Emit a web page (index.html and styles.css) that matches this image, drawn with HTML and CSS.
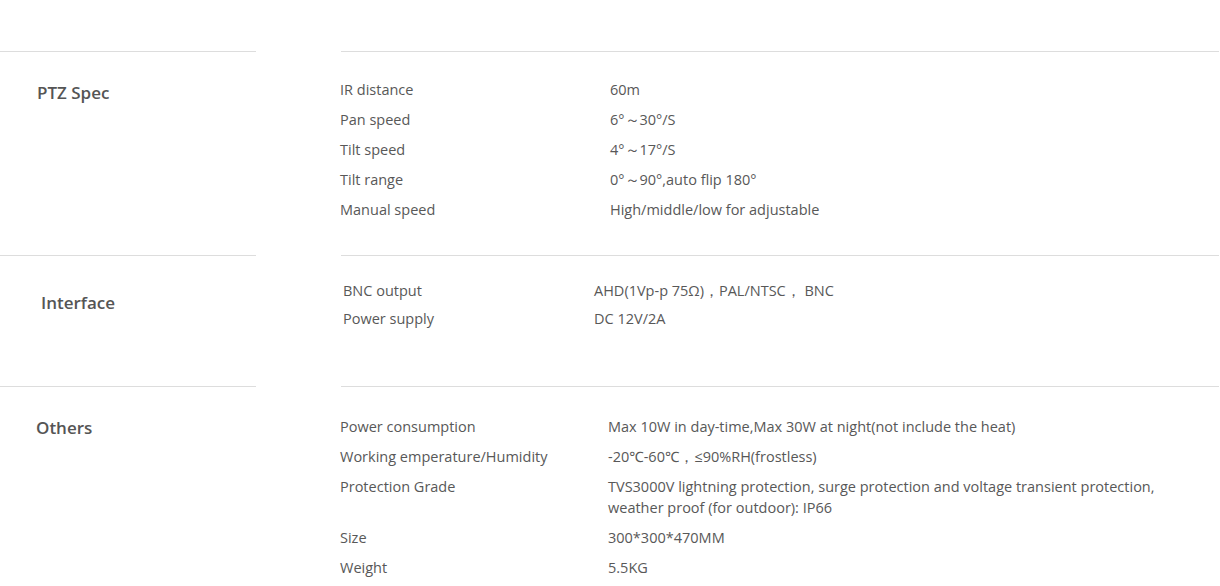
FILE: index.html
```html
<!doctype html>
<html>
<head>
    <meta charset="utf-8"/>
    <title>specs</title>
    <link rel="stylesheet" href="styles.css">
</head>
<body>

<div id="specs">

    <div class="section ptz">
        <div class="head"><h3>PTZ Spec</h3></div>
        <div class="rows">
            <div class="row"><span class="key">IR distance</span><span class="val">60m</span></div>
            <div class="row"><span class="key">Pan speed</span><span class="val">6°～30°/S</span></div>
            <div class="row"><span class="key">Tilt speed</span><span class="val">4°～17°/S</span></div>
            <div class="row"><span class="key">Tilt range</span><span class="val">0°～90°,auto flip 180°</span></div>
            <div class="row"><span class="key">Manual speed</span><span class="val">High/middle/low for adjustable</span></div>
        </div>
    </div>

    <div class="section iface">
        <div class="head"><h3>Interface</h3></div>
        <div class="rows">
            <div class="row"><span class="key">BNC output</span><span class="val">AHD(1Vp-p 75Ω)，PAL/NTSC， BNC</span></div>
            <div class="row"><span class="key">Power supply</span><span class="val">DC 12V/2A</span></div>
        </div>
    </div>

    <div class="section others">
        <div class="head"><h3>Others</h3></div>
        <div class="rows">
            <div class="row"><span class="key">Power consumption</span><span class="val">Max 10W in day-time,Max 30W at night(not include the heat)</span></div>
            <div class="row"><span class="key">Working emperature/Humidity</span><span class="val">-20℃-60℃，≤90%RH(frostless)</span></div>
            <div class="row"><span class="key">Protection Grade</span><span class="val">TVS3000V lightning protection, surge protection and voltage transient protection, weather proof (for outdoor): IP66</span></div>
            <div class="row"><span class="key">Size</span><span class="val">300*300*470MM</span></div>
            <div class="row"><span class="key">Weight</span><span class="val">5.5KG</span></div>
        </div>
    </div>

</div>

</body>
</html>
```

FILE: styles.css
```css
body {
    margin: 0;
    background: #fff;
    color: #585858;
    font-family: "Open Sans", "Noto Sans", sans-serif;
    font-size: 14.5px;
}
#specs {
    padding-top: 51px;
    width: 1219px;
}
.section {
    display: flex;
    gap: 85px;
}
.head {
    width: 256px;
    flex: none;
    border-top: 1px solid #ddd;
    padding-top: 29px;
    padding-left: 37px;
    box-sizing: border-box;
}
.head h3 {
    margin: 0;
    font-size: 17px;
    font-weight: 600;
    line-height: 24px;
    color: #555;
}
.rows {
    flex: 1;
    border-top: 1px solid #ddd;
    padding-top: 22px;
    padding-bottom: 31px;
}
.row {
    display: flex;
    line-height: 21px;
    padding: 4.5px 0;
    margin-left: -1px;
}
.key {
    width: 270px;
    flex: none;
}
.val {
    flex: 1;
    padding-right: 50px;
}

.iface .head {
    padding-top: 35px;
    padding-left: 41px;
}
.iface .rows {
    padding-top: 20px;
    padding-bottom: 54px;
    padding-left: 3px;
}
.iface .row {
    padding: 3.5px 0;
}
.iface .key {
    width: 251px;
}

.others .head {
    padding-left: 36px;
}
.others .rows {
    padding-top: 24px;
    padding-bottom: 10px;
}
.others .key {
    width: 268px;
}
```
